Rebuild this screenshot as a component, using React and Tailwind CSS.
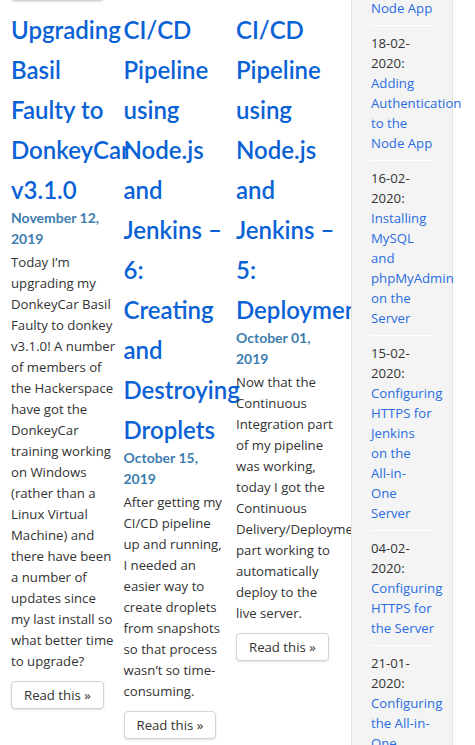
import React from 'react';

const posts = [
  {
    title: 'Upgrading Basil Faulty to DonkeyCar v3.1.0',
    date: 'November 12, 2019',
    excerpt:
      'Today I’m upgrading my DonkeyCar Basil Faulty to donkey v3.1.0! A number of members of the Hackerspace have got the DonkeyCar training working on Windows (rather than a Linux Virtual Machine) and there have been a number of updates since my last install so what better time to upgrade?',
  },
  {
    title: 'CI/CD Pipeline using Node.js and Jenkins – 6: Creating and Destroying Droplets',
    date: 'October 15, 2019',
    excerpt:
      'After getting my CI/CD pipeline up and running, I needed an easier way to create droplets from snapshots so that process wasn’t so time-consuming.',
  },
  {
    title: 'CI/CD Pipeline using Node.js and Jenkins – 5: Deployment',
    date: 'October 01, 2019',
    excerpt:
      'Now that the Continuous Integration part of my pipeline was working, today I got the Continuous Delivery/Deployment part working to automatically deploy to the live server.',
  },
];

// narrow sidebar: a couple of breaks pinned so wrapping matches
const recent = [
  { date: '18-02-2020:', title: 'Adding Authentication to the Node App' },
  { date: '16-02-2020:', title: 'Installing MySQL and phpMyAdmin on the Server' },
  { date: '15-02-2020:', title: 'Configuring HTTPS for Jenkins on the All-in-\nOne Server' },
  { date: '04-02-2020:', title: 'Configuring HTTPS for the\u00a0Server' },
  { date: '21-01-2020:', title: 'Configuring the All-in-One Server' },
];

const ReadButton = ({ className = '' }) => (
  <button
    className={
      "block rounded-[4px] border border-[#d4d4d4] bg-white px-3 py-[3px] font-['Open_Sans',sans-serif] text-[13.2px] leading-[20px] text-[#333] shadow-[0_1px_2px_rgba(0,0,0,0.12)] " +
      className
    }
  >
    Read this »
  </button>
);

const Post = ({ post, first }) => (
  <article className="pl-[11px]">
    <div className="w-[104.5px]">
      {/* tail of the previous row's button, scrolled mostly out of view */}
      {first && <ReadButton className="-mt-[37px] mb-[9px]" />}
      <h2 className="-mb-[2px] font-['Lato',sans-serif] text-[24px] font-semibold leading-[40px] text-[#0a62d6]">
        {post.title}
      </h2>
      <div className="font-['Lato',sans-serif] text-[14px] font-bold leading-[20.5px] text-[#3d7db0]">
        {post.date}
      </div>
      <p className="mt-[3px] text-[13.2px] leading-[21px] text-[#333]">{post.excerpt}</p>
      <ReadButton className="mt-[9px]" />
    </div>
  </article>
);

export default function App() {
  return (
    <div className="flex h-[745px] w-[475px] overflow-hidden bg-white font-['Open_Sans',sans-serif]">
      <main className="grid w-[351px] shrink-0 grid-cols-[112.5px_112.5px_112.5px] items-start pt-[10px]">
        {posts.map((p, i) => (
          <Post key={i} post={p} first={i === 0} />
        ))}
      </main>
      <aside className="relative z-10 h-full w-[102px] shrink-0 border-x border-[#e2e2e2] bg-[#f4f4f4] px-[19px] text-[13.2px] leading-[20px]">
        <ul className="-mt-[2px]">
          <li className="border-b border-white pb-[7px]">
            <a className="text-[#2a6de0]">Node App</a>
          </li>
          {recent.map((r, i) => (
            <li key={i} className="border-b border-white py-[7px]">
              <span className="text-[#333]">{r.date} </span>
              <a className="whitespace-pre-line text-[#2a6de0]">{r.title}</a>
            </li>
          ))}
        </ul>
      </aside>
    </div>
  );
}
